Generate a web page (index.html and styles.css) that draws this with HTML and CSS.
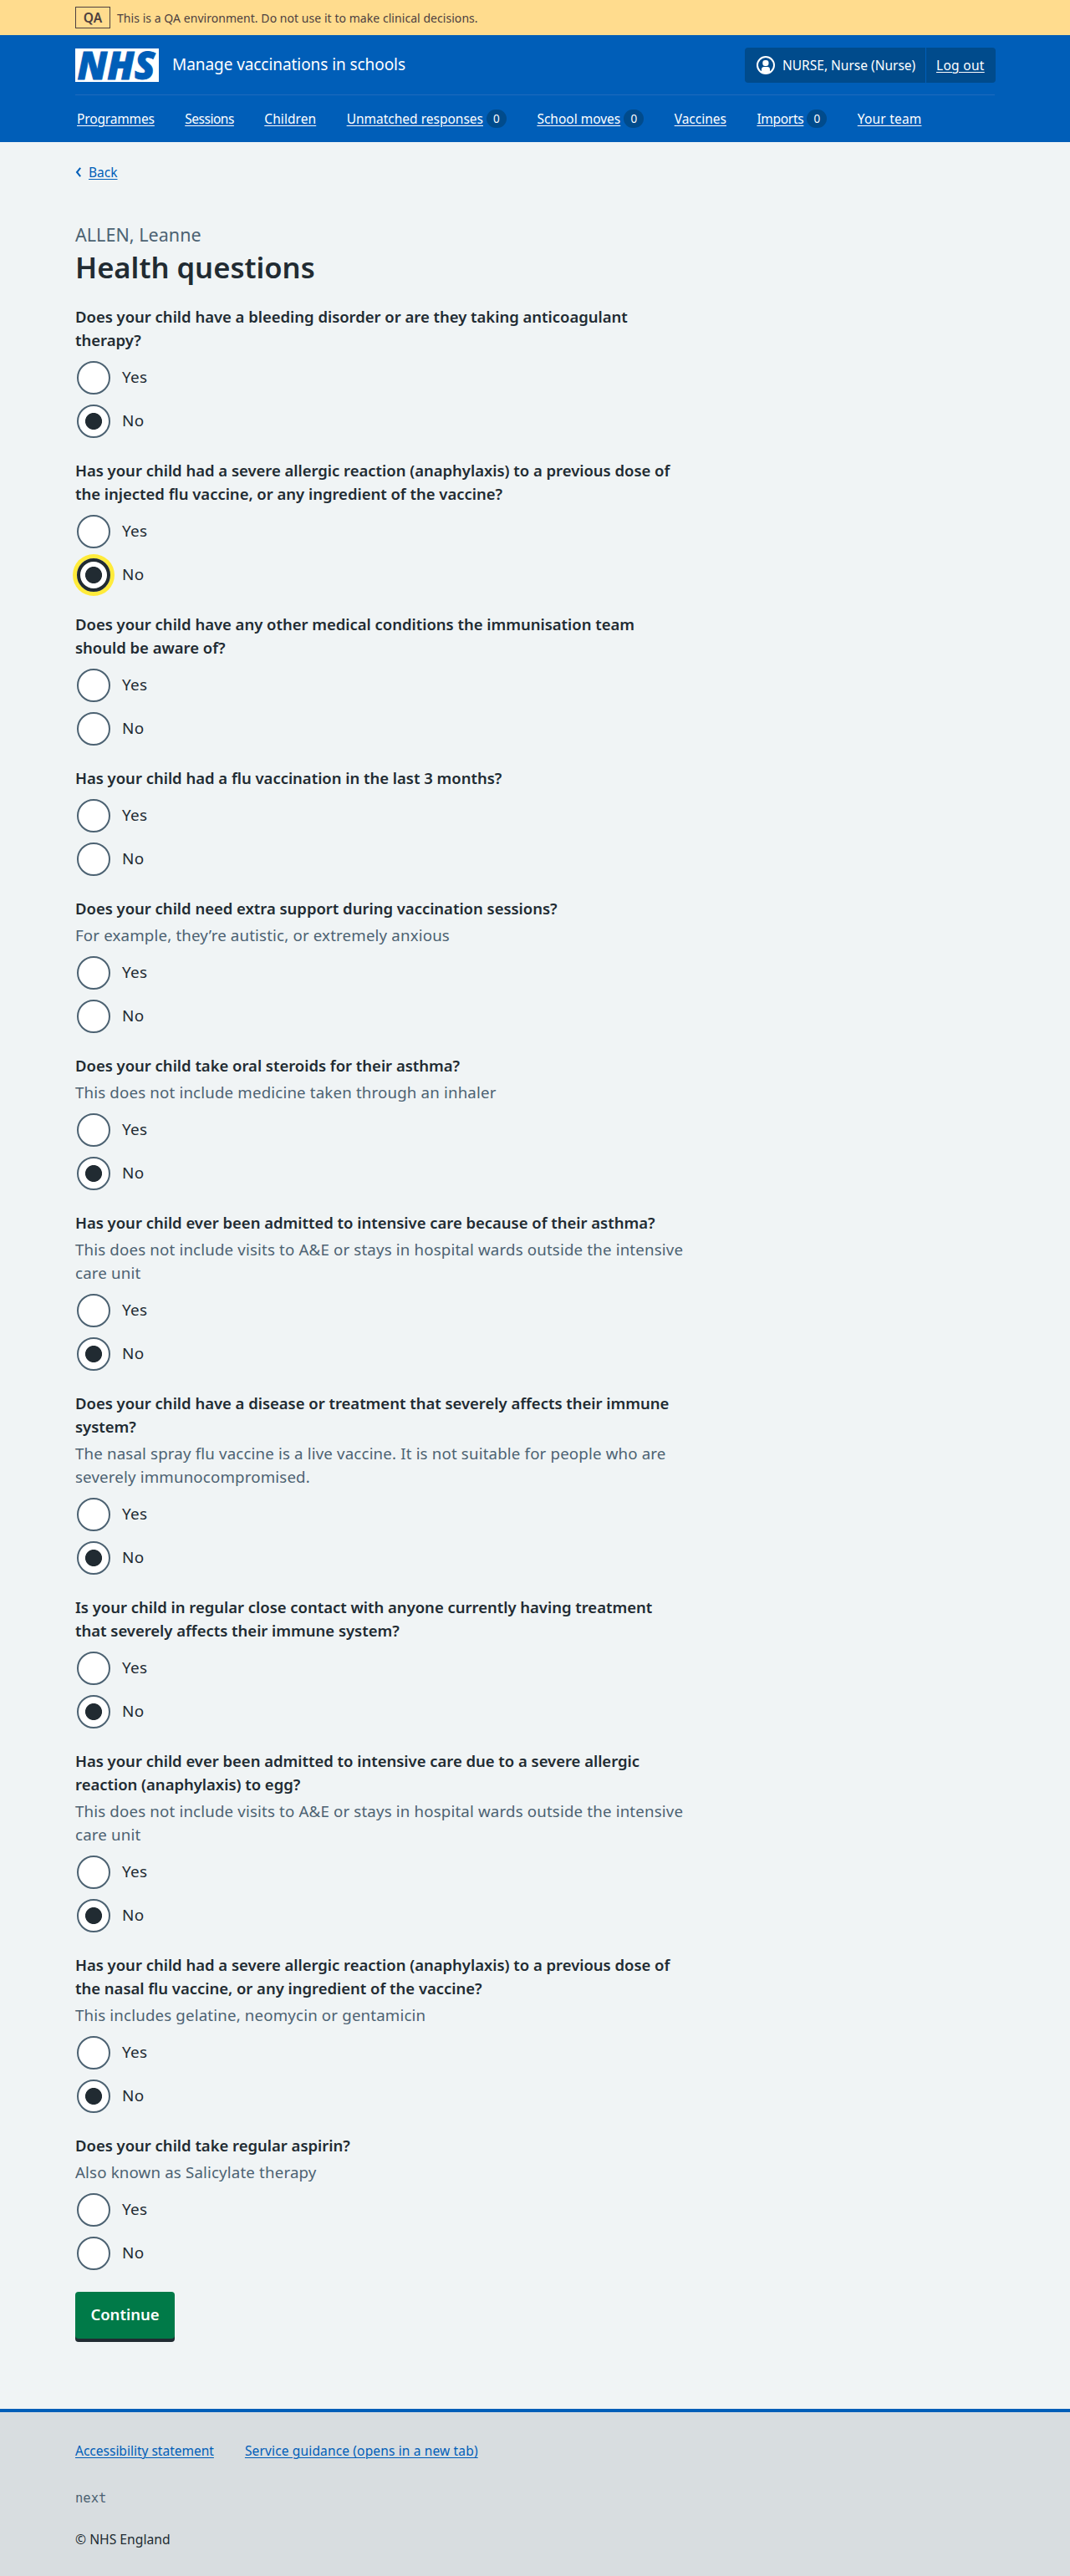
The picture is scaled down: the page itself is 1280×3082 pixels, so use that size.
FILE: index.html
```html
<!DOCTYPE html>
<html lang="en">
<head>
<meta charset="utf-8">
<title>Health questions – Manage vaccinations in schools</title>
<link rel="stylesheet" href="styles.css">
</head>
<body>
<div class="env"><div class="container env-inner"><strong class="env-tag">QA</strong><span>This is a QA environment. Do not use it to make clinical decisions.</span></div></div>
<header class="header">
  <div class="container">
    <div class="header-top">
      <svg class="logo" width="100" height="40" viewBox="0 0 100 40" role="img" aria-label="NHS"><rect width="100" height="40" fill="#fff"/><text x="2.5" y="36.5" textLength="93" lengthAdjust="spacingAndGlyphs">NHS</text></svg>
      <span class="service">Manage vaccinations in schools</span>
      <div class="account">
        <div class="account-item user">
          <svg width="22" height="22" viewBox="0 0 22 22" aria-hidden="true"><circle cx="11" cy="11" r="10" fill="none" stroke="#fff" stroke-width="2"/><rect x="7.3" y="4.9" width="7.2" height="7" rx="3" fill="#fff"/><path d="M6 19v-3a3 3 0 0 1 3-3h4a3 3 0 0 1 3 3v3q-5 3-10 0Z" fill="#fff"/></svg>
          <span>NURSE, Nurse (Nurse)</span>
        </div>
        <div class="account-item logout"><a href="#">Log out</a></div>
      </div>
    </div>
    <nav class="nav">
      <div><a class="n1" href="#">Programmes</a></div>
      <div><a class="n2" href="#">Sessions</a></div>
      <div><a class="n3" href="#">Children</a></div>
      <div><a class="n4" href="#">Unmatched responses</a><span class="badge">0</span></div>
      <div><a class="n5" href="#">School moves</a><span class="badge">0</span></div>
      <div><a class="n6" href="#">Vaccines</a></div>
      <div><a class="n7" href="#">Imports</a><span class="badge">0</span></div>
      <div><a class="n8" href="#">Your team</a></div>
    </nav>
  </div>
</header>
<div class="container">
  <div class="back"><svg width="8" height="12" viewBox="0 0 8 12" aria-hidden="true"><path d="M6.2.8 2 6l4.200 5.200" fill="none" stroke="#005eb8" stroke-width="2"/></svg><a href="#">Back</a></div>
  <main class="main">
    <div class="caption">ALLEN, Leanne</div>
    <h1>Health questions</h1>
    <form>
      <section class="q"><h2>Does your child have a bleeding disorder or are they taking anticoagulant therapy?</h2>
        <div class="radios"><label><input type="radio" name="q1"><span>Yes</span></label><label><input type="radio" name="q1" checked><span>No</span></label></div></section>
      <section class="q"><h2>Has your child had a severe allergic reaction (anaphylaxis) to a previous dose of the injected flu vaccine, or any ingredient of the vaccine?</h2>
        <div class="radios"><label><input type="radio" name="q2"><span>Yes</span></label><label><input class="focused" type="radio" name="q2" checked><span>No</span></label></div></section>
      <section class="q"><h2>Does your child have any other medical conditions the immunisation team should be aware of?</h2>
        <div class="radios"><label><input type="radio" name="q3"><span>Yes</span></label><label><input type="radio" name="q3"><span>No</span></label></div></section>
      <section class="q"><h2>Has your child had a flu vaccination in the last 3 months?</h2>
        <div class="radios"><label><input type="radio" name="q4"><span>Yes</span></label><label><input type="radio" name="q4"><span>No</span></label></div></section>
      <section class="q"><h2>Does your child need extra support during vaccination sessions?</h2><p class="hint">For example, they’re autistic, or extremely anxious</p>
        <div class="radios"><label><input type="radio" name="q5"><span>Yes</span></label><label><input type="radio" name="q5"><span>No</span></label></div></section>
      <section class="q"><h2>Does your child take oral steroids for their asthma?</h2><p class="hint">This does not include medicine taken through an inhaler</p>
        <div class="radios"><label><input type="radio" name="q6"><span>Yes</span></label><label><input type="radio" name="q6" checked><span>No</span></label></div></section>
      <section class="q"><h2>Has your child ever been admitted to intensive care because of their asthma?</h2><p class="hint">This does not include visits to A&amp;E or stays in hospital wards outside the intensive care unit</p>
        <div class="radios"><label><input type="radio" name="q7"><span>Yes</span></label><label><input type="radio" name="q7" checked><span>No</span></label></div></section>
      <section class="q"><h2>Does your child have a disease or treatment that severely affects their immune system?</h2><p class="hint">The nasal spray flu vaccine is a live vaccine. It is not suitable for people who are severely immunocompromised.</p>
        <div class="radios"><label><input type="radio" name="q8"><span>Yes</span></label><label><input type="radio" name="q8" checked><span>No</span></label></div></section>
      <section class="q"><h2>Is your child in regular close contact with anyone currently having treatment that severely affects their immune system?</h2>
        <div class="radios"><label><input type="radio" name="q9"><span>Yes</span></label><label><input type="radio" name="q9" checked><span>No</span></label></div></section>
      <section class="q"><h2>Has your child ever been admitted to intensive care due to a severe allergic reaction (anaphylaxis) to egg?</h2><p class="hint">This does not include visits to A&amp;E or stays in hospital wards outside the intensive care unit</p>
        <div class="radios"><label><input type="radio" name="q10"><span>Yes</span></label><label><input type="radio" name="q10" checked><span>No</span></label></div></section>
      <section class="q"><h2>Has your child had a severe allergic reaction (anaphylaxis) to a previous dose of the nasal flu vaccine, or any ingredient of the vaccine?</h2><p class="hint">This includes gelatine, neomycin or gentamicin</p>
        <div class="radios"><label><input type="radio" name="q11"><span>Yes</span></label><label><input type="radio" name="q11" checked><span>No</span></label></div></section>
      <section class="q"><h2>Does your child take regular aspirin?</h2><p class="hint">Also known as Salicylate therapy</p>
        <div class="radios"><label><input type="radio" name="q12"><span>Yes</span></label><label><input type="radio" name="q12"><span>No</span></label></div></section>
      <button class="button" type="button">Continue</button>
    </form>
  </main>
</div>
<footer class="footer">
  <div class="container">
    <div class="footer-links"><a href="#">Accessibility statement</a><a class="guidance" href="#">Service guidance (opens in a new tab)</a></div>
    <div class="release">next</div>
    <div class="copyright">© NHS England</div>
  </div>
</footer>
</body>
</html>
```
FILE: styles.css
```css
* { box-sizing: border-box; }
body { margin: 0; background: #f0f4f5; color: #212b32; font: 400 15.5px/24px "Noto Sans", sans-serif; }
.container { width: 1100px; margin: 0 auto; }
a { color: #005eb8; text-decoration: underline; text-decoration-thickness: 1px; text-underline-offset: 2px; text-decoration-skip-ink: auto; }

.env { height: 42px; background: #ffdc8e; color: #4d3f3f; }
.env-inner { height: 42px; display: flex; align-items: center; gap: 8px; font-size: 14px; line-height: 20px; letter-spacing: .05px; }
.env-tag { width: 42px; height: 26px; border: 1px solid #4d3f3f; font-size: 15.5px; line-height: 24px; font-weight: 600; text-align: center; letter-spacing: 0; }
.env-inner span { padding-top: 1px; }

.header { height: 128px; background: #005eb8; color: #fff; }
.header a { color: #fff; }
.header-top { height: 72px; display: flex; align-items: center; border-bottom: 1px solid #1f6bbd; }
.logo { display: block; overflow: visible; }
.logo text { font: italic 800 46px "Open Sans", sans-serif; fill: #005eb8; stroke: #005eb8; stroke-width: .8px; }
.service { margin: -2px auto 0 16px; font-size: 19px; line-height: 28px; letter-spacing: -.07px; }
.account { display: flex; height: 42px; margin-right: -1px; border-radius: 4px; background: #004b8c; }
.account-item { display: flex; align-items: center; }
.user { width: 217px; gap: 9px; padding-left: 14px; border-right: 1px solid #005eb8; white-space: nowrap; }
.user svg { flex: none; }
.logout { width: 83px; padding-left: 12px; letter-spacing: .3px; }
.nav { height: 56px; padding: 0 2px; display: flex; align-items: center; gap: 36.4px; }
.nav div { display: flex; align-items: center; white-space: nowrap; }
.badge { width: 24px; height: 22px; margin-left: 4px; border-radius: 12px; background: #004b8c; font-size: 13.5px; line-height: 22px; text-align: center; }
.n1 { letter-spacing: -.15px; }
.n2 { letter-spacing: -.48px; }
.n3 { letter-spacing: .08px; }
.n7 { letter-spacing: -.3px; }
.n8 { letter-spacing: .2px; }

.back { height: 24px; margin-top: 24px; display: flex; align-items: center; gap: 8px; }
.main { width: 733px; margin-top: 46px; padding-bottom: 80px; }
.caption { font-size: 21.5px; line-height: 33px; color: #4c6272; letter-spacing: .05px; }
h1 { margin: 0 0 23px; padding-top: 1px; font-size: 34.6px; line-height: 44px; font-weight: 600; }
h2 { max-width: 722px; margin: 0; font-size: 18.5px; line-height: 28px; font-weight: 600; letter-spacing: -.03px; }
.hint { margin: 4px 0 0; font-size: 18.7px; line-height: 28px; letter-spacing: .16px; color: #4c6272; }
.q { margin-bottom: 25px; }
.radios { margin-top: 11px; display: flex; flex-direction: column; gap: 12px; }
label { display: flex; align-items: center; height: 40px; padding-left: 2px; gap: 14px; font-size: 18.9px; line-height: 28px; letter-spacing: .35px; }
label span { margin-top: -2px; }
input { appearance: none; width: 40px; height: 40px; margin: 0; border: 2px solid #4c6272; border-radius: 50%; background: #fff; }
input:checked { background: radial-gradient(circle, #212b32 9.6px, #fff 10.4px); }
.focused { border: 4px solid #212b32; box-shadow: 0 0 0 5px #ffeb3b; }
.button { display: block; width: 119px; height: 56px; margin: 26px 0 4px; padding: 0 0 2px; border: 0; border-radius: 4px; background: #007a48; box-shadow: 0 4px 0 #212b32; color: #fff; font: 600 18.5px/28px "Noto Sans", sans-serif; }

.footer { height: 200px; padding-top: 34px; border-top: 4px solid #005eb8; background: #d8dde0; }
.footer-links { display: flex; gap: 37px; }
.guidance { letter-spacing: .15px; }
.release { margin-top: 33px; font: 15.5px/24px "DejaVu Sans Mono", monospace; color: #4c6272; }
.copyright { margin-top: 25px; font-size: 15.7px; }
```
